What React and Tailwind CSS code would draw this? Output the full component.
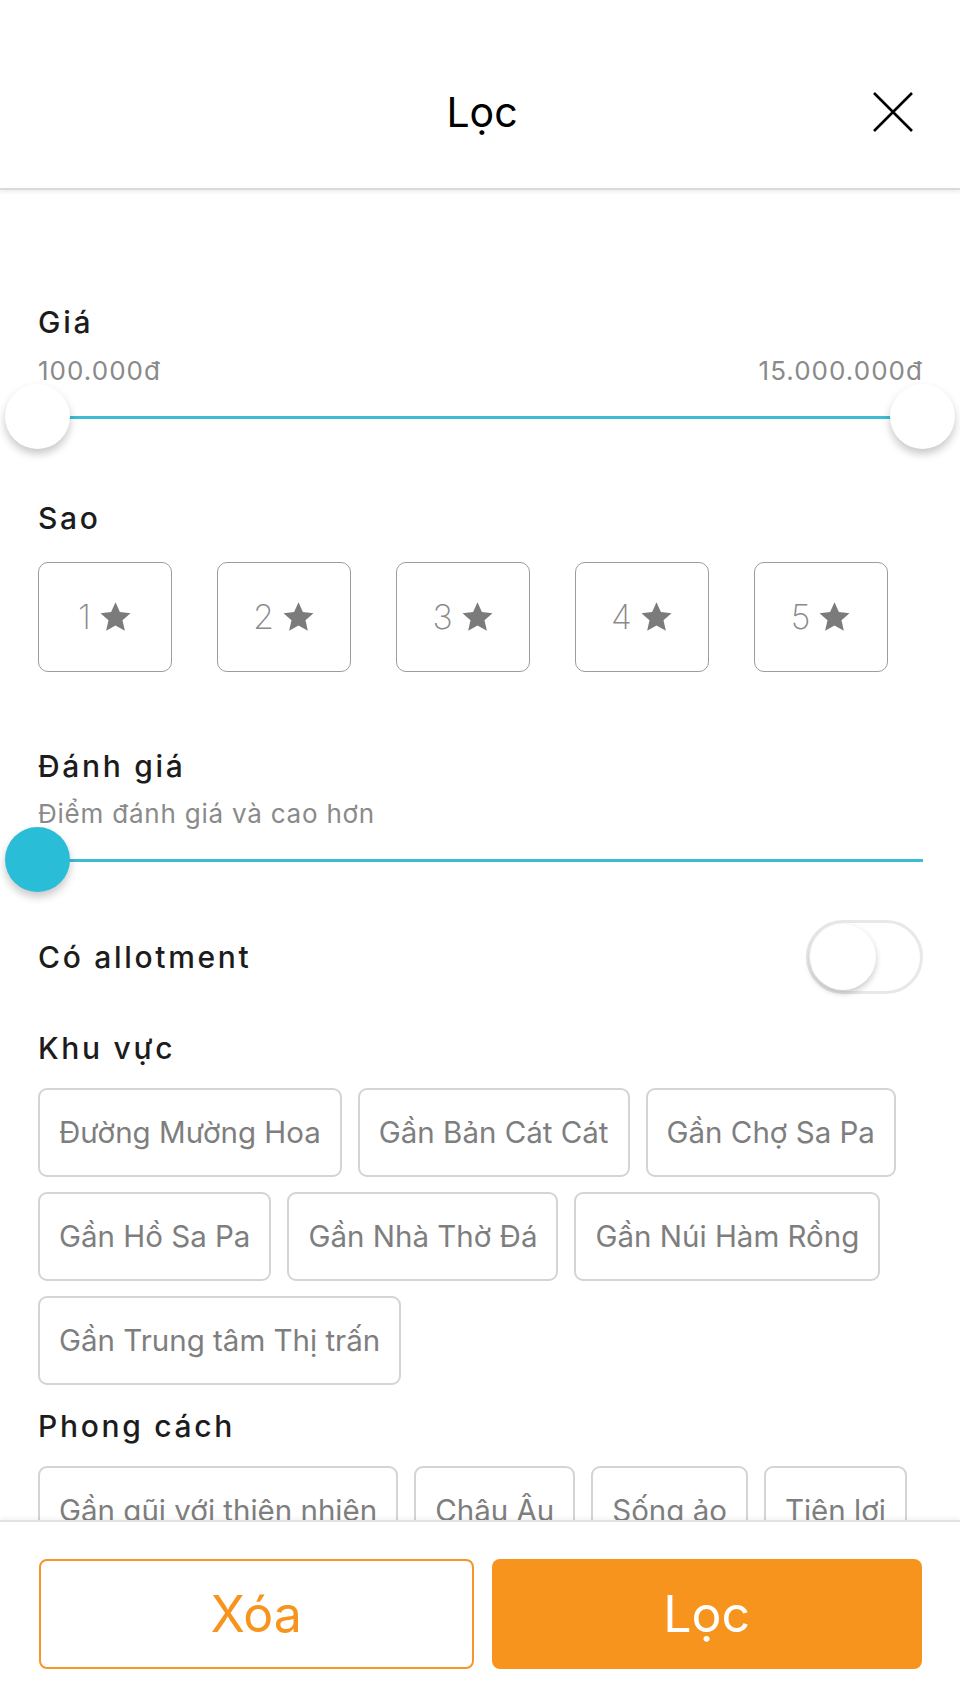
import React from "react";

const F = { fontFamily: "Inter, 'Noto Sans', sans-serif" };

function Star() {
  return (
    <svg width="33" height="32" viewBox="0 0 24 23" className="block">
      <path
        d="M12 0.8l3.2 7.1 7.7 0.8-5.8 5.2 1.7 7.6L12 17.6 5.2 21.5l1.7-7.6L1.1 8.7l7.7-0.8z"
        fill="#7b7b7b"
      />
    </svg>
  );
}

function Label({ children }) {
  return (
    <div className="text-[30px] leading-[34px] font-medium text-[#1c1c1c] tracking-[0.09em]">
      {children}
    </div>
  );
}

function Chip({ children }) {
  return (
    <div className="h-[89px] px-[19px] flex items-center border-2 border-[#d4d4d4] rounded-[9px] text-[29.5px] text-[#7e7e7e] whitespace-nowrap">
      {children}
    </div>
  );
}

export default function App() {
  const areas1 = ["Đường Mường Hoa", "Gần Bản Cát Cát", "Gần Chợ Sa Pa", "Gần Hồ Sa Pa", "Gần Nhà Thờ Đá", "Gần Núi Hàm Rồng", "Gần Trung tâm Thị trấn"];
  const styles = ["Gần gũi với thiên nhiên", "Châu Âu", "Sống ảo", "Tiện lợi"];
  return (
    <div style={F} className="w-[960px] h-[1707px] bg-white flex flex-col overflow-hidden">
      {/* Header */}
      <div className="h-[190px] shrink-0 grid grid-cols-[1fr_auto_1fr] items-center pt-[36px] border-b-2 border-[#dadada] shadow-[0_2px_4px_rgba(0,0,0,0.08)] relative z-10">
        <div />
        <div className="text-[41px] leading-[48px] text-black pl-[4px]">Lọc</div>
        <div className="flex justify-end pr-[47px]">
          <svg width="40" height="40" viewBox="0 0 40 40">
            <path d="M1 1L39 39M39 1L1 39" stroke="#000" strokeWidth="2.6" />
          </svg>
        </div>
      </div>

      {/* Content */}
      <div className="flex-1 overflow-hidden pl-[38px] pr-[37px]">
        <div className="mt-[115px]">
          <Label>Giá</Label>
        </div>
        <div className="mt-[17px] flex justify-between text-[26px] leading-[30px] tracking-[0.04em] text-[#8a8a8a]">
          <span>100.000đ</span>
          <span>15.000.000đ</span>
        </div>
        <div className="mt-[1px] h-[60px] relative flex items-center">
          <div className="w-full h-[3px] bg-[#3dbcd3]" />
          <div className="absolute left-[-33px] top-[-3px] w-[65px] h-[65px] rounded-full bg-white shadow-[0_5px_8px_rgba(0,0,0,0.22)]" />
          <div className="absolute right-[-32px] top-[-3px] w-[65px] h-[65px] rounded-full bg-white shadow-[0_5px_8px_rgba(0,0,0,0.22)]" />
        </div>

        <div className="mt-[54px]">
          <Label>Sao</Label>
        </div>
        <div className="mt-[27px] flex gap-[45px]">
          {[1, 2, 3, 4, 5].map((n) => (
            <div key={n} className="w-[134px] h-[110px] border-[1.5px] border-[#9c9c9c] rounded-[10px] flex items-center justify-center gap-[8px]">
              <span className="text-[34px] font-extralight text-[#8a8a8a] leading-none">{n}</span>
              <Star />
            </div>
          ))}
        </div>

        <div className="mt-[77px]">
          <Label>Đánh giá</Label>
        </div>
        <div className="mt-[16px] text-[26px] leading-[30px] tracking-[0.03em] text-[#8a8a8a]">Điểm đánh giá và cao hơn</div>
        <div className="mt-[1px] h-[60px] relative flex items-center">
          <div className="w-full h-[3px] bg-[#3dbcd3]" />
          <div className="absolute left-[-33px] top-[-3px] w-[65px] h-[65px] rounded-full bg-[#29bdd8] shadow-[0_5px_8px_rgba(0,0,0,0.22)]" />
        </div>

        <div className="mt-[30px] h-[74px] flex items-center justify-between">
          <Label>Có allotment</Label>
          <div className="w-[117px] h-[74px] rounded-full border-[3px] border-[#e8e8e8] bg-white flex items-center pl-[1px]">
            <div className="w-[66px] h-[66px] rounded-full bg-white shadow-[0_3px_6px_rgba(0,0,0,0.22)]" />
          </div>
        </div>

        <div className="mt-[37px]">
          <Label>Khu vực</Label>
        </div>
        <div className="mt-[23px] flex flex-wrap gap-x-[16px] gap-y-[15px]">
          {areas1.map((a) => (
            <Chip key={a}>{a}</Chip>
          ))}
        </div>

        <div className="mt-[24px]">
          <Label>Phong cách</Label>
        </div>
        <div className="mt-[23px] flex flex-wrap gap-x-[16px] gap-y-[15px]">
          {styles.map((a) => (
            <Chip key={a}>{a}</Chip>
          ))}
        </div>
      </div>

      {/* Footer */}
      <div className="h-[187px] shrink-0 bg-white border-t-2 border-[#e2e2e2] shadow-[0_-2px_4px_rgba(0,0,0,0.05)] relative z-10 pt-[37px] pl-[39px] pr-[38px] flex gap-[18px] items-start">
        <div className="flex-1 h-[110px] rounded-[8px] border-2 border-[#f5952a] bg-white flex items-center justify-center text-[50px] text-[#f7941e]">
          Xóa
        </div>
        <div className="flex-1 h-[110px] rounded-[8px] bg-[#f7941e] flex items-center justify-center text-[50px] text-white">
          Lọc
        </div>
      </div>
    </div>
  );
}
